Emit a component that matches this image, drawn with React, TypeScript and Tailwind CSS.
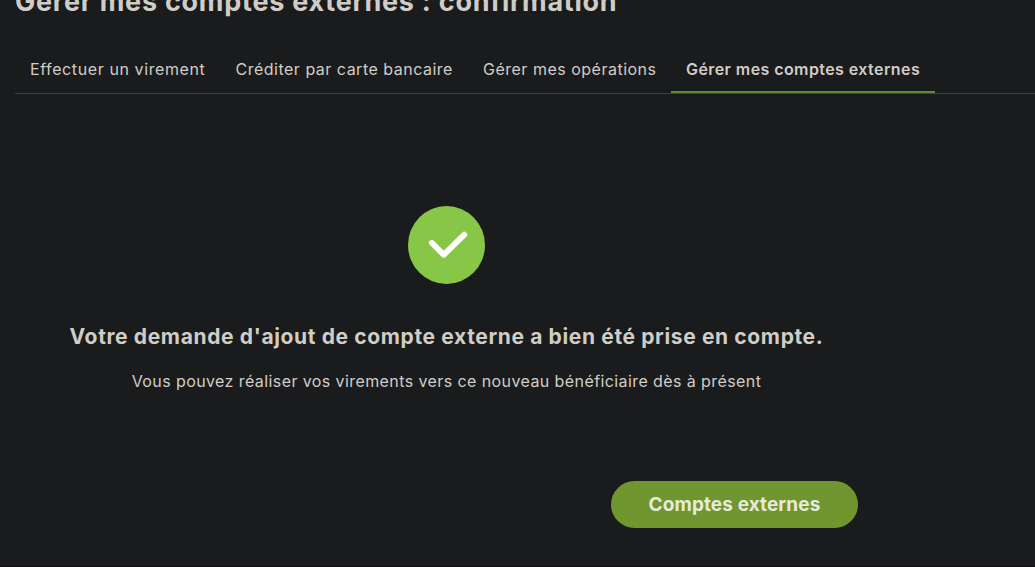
const tabs = [
  { label: "Effectuer un virement", style: "w-[205.5px] tracking-[0.6px]" },
  { label: "Créditer par carte bancaire", style: "w-[247.5px] tracking-[0.5px]" },
  { label: "Gérer mes opérations", style: "w-[203px] tracking-[0.5px]" },
];

export default function App() {
  return (
    <div className="h-[567px] w-[1035px] overflow-hidden border-b border-[#150f15] bg-[#1a1b1c] pl-[15px] font-['Inter',sans-serif] text-[#d0cdc7]">
      <h1 className="-mt-[18px] h-[64px] whitespace-nowrap text-[27px] leading-[40px] font-bold tracking-[0.75px]">
        Gérer mes comptes externes : confirmation
      </h1>
      <nav className="flex h-[48px] border-b border-[#3d3f40] text-[16px] leading-[47px] whitespace-nowrap">
        {tabs.map((t) => (
          <a key={t.label} className={`${t.style} shrink-0 pl-[15px]`}>
            {t.label}
          </a>
        ))}
        <a className="h-[47px] w-[264px] shrink-0 border-b-2 border-[#5f8a3c] pl-[15px] font-semibold tracking-[0.42px]">
          Gérer mes comptes externes
        </a>
      </nav>
      <main className="flex w-[863px] flex-col items-center pt-[112px] whitespace-nowrap">
        <svg width="77" height="78" viewBox="0 0 77 78" fill="none">
          <ellipse cx="38.5" cy="39" rx="38.5" ry="39" fill="#88c648" />
          <path d="M23.8 36.8L35.7 48.8L56.3 28.7" stroke="#fff" strokeWidth="5.8" strokeLinecap="round" strokeLinejoin="round" />
        </svg>
        <h2 className="mt-[39px] text-[21px] leading-[28px] font-bold tracking-[0.63px]">
          Votre demande d'ajout de compte externe a bien été prise en compte.
        </h2>
        <p className="mt-[18px] text-[16px] leading-[24px] tracking-[0.41px]">
          Vous pouvez réaliser vos virements vers ce nouveau bénéficiaire dès à présent
        </p>
        <button className="mt-[88px] mr-[20px] h-[47px] w-[247px] self-end rounded-full bg-[#70962f] pt-[2px] text-[19px] font-bold tracking-[0.1px] text-[#e6eadb]">
          Comptes externes
        </button>
      </main>
    </div>
  );
}
